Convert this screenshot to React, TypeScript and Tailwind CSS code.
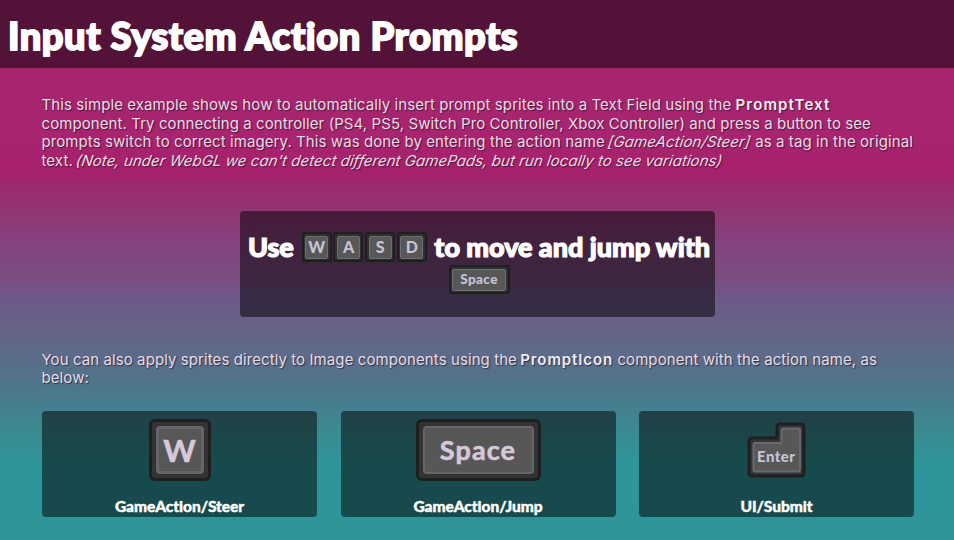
import { ReactNode } from "react";

const heading = "font-['Lato',sans-serif] font-black text-white whitespace-nowrap";

function SmallKey({ label, wide = false }: { label: string; wide?: boolean }) {
  return (
    <span
      className={`flex shrink-0 rounded-[3px] border-2 border-[#1e2020] bg-[#2f3030] p-[1.5px] ${
        wide ? "h-[29px] w-[61px]" : "h-[30px] w-[30px]"
      }`}
    >
      <span
        className={`flex flex-1 items-center justify-center rounded-[2px] border border-[#706d73] bg-[#575758] font-['Lato',sans-serif] leading-none font-black text-[#c6c3d2] ${
          wide ? "text-[13.5px] tracking-[0.4px]" : "text-[16px]"
        }`}
      >
        {label}
      </span>
    </span>
  );
}

function LargeKey({ label, wide = false }: { label: string; wide?: boolean }) {
  return (
    <div
      className={`flex rounded-[6px] border-[3.5px] border-[#1e2020] bg-[#333334] p-1 ${
        wide ? "h-[62px] w-[125px]" : "h-[62px] w-[62px]"
      }`}
    >
      <div
        className={`flex flex-1 items-center justify-center rounded-[4px] border-[#68656b] bg-[#575758] font-['Lato',sans-serif] leading-none text-[#d6c8d8] ${
          wide
            ? "border-2 pb-[1px] text-[27px] font-bold tracking-[1.1px] [-webkit-text-stroke:0.6px_#d6c8d8]"
            : "border-[3px] pt-[2px] text-[31px] font-bold [-webkit-text-stroke:0.6px_#d6c8d8]"
        }`}
      >
        {label}
      </div>
    </div>
  );
}

function EnterKey() {
  return (
    <svg width="60" height="56" viewBox="0 0 60 56">
      <path
        d="M33 2h21a3 3 0 0 1 3 3v46a3 3 0 0 1-3 3H5a3 3 0 0 1-3-3V19a3 3 0 0 1 3-3h25V5a3 3 0 0 1 3-3z"
        fill="#353537"
        stroke="#1e2020"
        strokeWidth="3"
        strokeLinejoin="round"
      />
      <path
        d="M36 6.500h15.500a1.500 1.500 0 0 1 1.500 1.500v40a1.500 1.500 0 0 1-1.500 1.500H8a1.500 1.500 0 0 1-1.500-1.500V22.500a1.500 1.500 0 0 1 1.500-1.500h26.500V8a1.500 1.500 0 0 1 1.500-1.500z"
        fill="#575758"
        stroke="#6b686f"
        strokeWidth="2"
      />
      <text
        x="10"
        y="40"
        textLength="38"
        fontFamily="Lato, sans-serif"
        fontWeight="900"
        fontSize="15"
        fill="#c3c4d4"
      >
        Enter
      </text>
    </svg>
  );
}

function Card({ label, children }: { label: string; children: ReactNode }) {
  return (
    <div className="flex h-[106px] flex-col rounded-[4px] bg-black/50">
      <div className="flex h-[80px] items-center justify-center">{children}</div>
      <div
        className={`${heading} mt-[7px] text-center text-[15.5px] leading-[22px] tracking-[-0.05px] [-webkit-text-stroke:0.4px_white]`}
      >
        {label}
      </div>
    </div>
  );
}

const body =
  "font-['Inter',sans-serif] text-[15px] leading-[18.4px] tracking-[0.085px] whitespace-nowrap text-[#e9dbe6] [text-shadow:1px_1px_1px_rgba(20,20,30,0.65)]";

export default function App() {
  return (
    <div className="flex h-[540px] w-[954px] flex-col overflow-hidden bg-[linear-gradient(to_bottom,#a7246f_0px,#a7246f_140px,#a7206b_167px,#93336f_205px,#844480_245px,#7a4d80_280px,#70578a_295px,#666385_327px,#5b6c8a_360px,#4f7589_382px,#447f90_408px,#3b8a8f_430px,#2f9599_462px,#2f9499_540px)]">
      <header className="h-[68px] bg-black/50 pl-[8px]">
        <h1
          className={`${heading} pt-[11px] text-[38px] leading-[48px] tracking-[0.54px] [-webkit-text-stroke:1.8px_white]`}
        >
          Input System Action Prompts
        </h1>
      </header>

      <main className="flex flex-col pt-[28.300px] pr-[40px] pl-[42px]">
        <div className={`${body} -ml-[0.5px]`}>
          <div>
            This simple example shows how to automatically insert prompt sprites into a Text Field using the{" "}
            <b className="font-semibold tracking-[1.15px] text-[#f6edf4]">PromptText</b>
          </div>
          <div>
            component. Try connecting a controller (PS4, PS5, Switch Pro Controller, Xbox Controller) and press a
            button to see
          </div>
          <div>
            prompts switch to correct imagery. This was done by entering the action name
            <i className="mr-[5px] ml-[3px] inline-block -skew-x-[10deg] tracking-[0.1px]">[GameAction/Steer]</i>
            as a tag in the original
          </div>
          <div>
            text.
            <i className="ml-[3px] inline-block -skew-x-[10deg] tracking-[0.05px]">
              (Note, under WebGL we can't detect different GamePads, but run locally to see variations)
            </i>
          </div>
        </div>

        <section className="mr-[1px] mt-[41.100px] flex h-[106px] w-[475px] flex-col items-center self-center rounded-[4px] bg-black/50 pt-[19px] pl-[3px]">
          <div
            className={`${heading} flex h-[35px] items-start text-[27px] leading-[33px] tracking-[-0.04px] [-webkit-text-stroke:1.2px_white]`}
          >
            <span>Use</span>
            <span className="mt-[2px] mr-[7.500px] ml-[8px] flex gap-[1.7px] [-webkit-text-stroke:0]">
              <SmallKey label="W" />
              <SmallKey label="A" />
              <SmallKey label="S" />
              <SmallKey label="D" />
            </span>
            <span>to move and jump with</span>
          </div>
          <SmallKey label="Space" wide />
        </section>

        <div className={`${body} mt-[34px] -ml-[0.5px]`}>
          <div>
            You can also apply sprites directly to Image components using the{" "}
            <b className="-ml-px font-semibold tracking-[0.9px] text-[#f2ebf4]">PromptIcon</b> component with the action
            name, as
          </div>
          <div>below:</div>
        </div>

        <section className="mt-[23.500px] grid grid-cols-3 gap-[23.500px]">
          <Card label="GameAction/Steer">
            <LargeKey label="W" />
          </Card>
          <Card label="GameAction/Jump">
            <LargeKey label="Space" wide />
          </Card>
          <Card label="UI/Submit">
            <EnterKey />
          </Card>
        </section>
      </main>
    </div>
  );
}
